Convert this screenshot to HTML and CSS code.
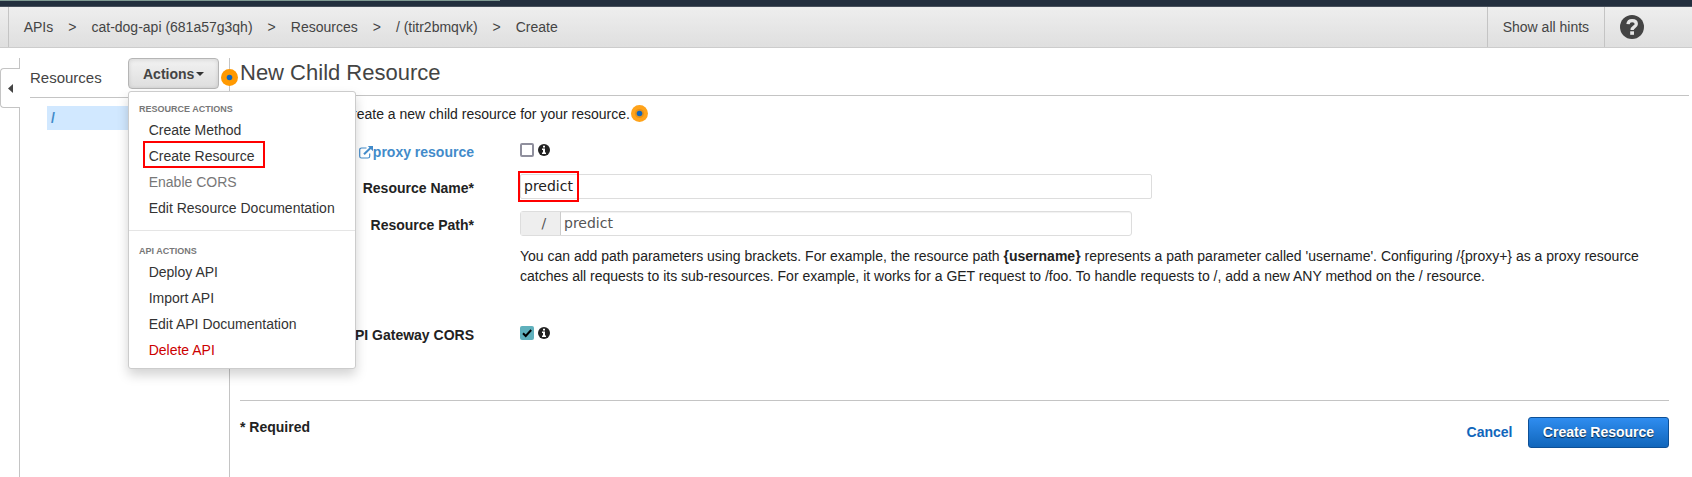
FILE: index.html
```html
<!DOCTYPE html>
<html lang="en">
<head>
<meta charset="utf-8">
<title>New Child Resource</title>
<link rel="stylesheet" href="styles.css">
</head>
<body>
<div class="topbar"><div class="progress"></div></div>
<header class="crumbs">
  <nav class="trail">
    <span>APIs</span><span class="sep">&gt;</span><span>cat-dog-api (681a57g3qh)</span><span class="sep">&gt;</span><span>Resources</span><span class="sep">&gt;</span><span>/ (titr2bmqvk)</span><span class="sep">&gt;</span><span>Create</span>
  </nav>
  <div class="hints">Show all hints</div>
  <div class="help">
    <svg width="24" height="24" viewBox="0 0 24 24"><circle cx="12" cy="12" r="12" fill="#444"/><path d="M8 9.2C8.200 6.700 9.700 5.600 12.100 5.600c2.500 0 4.200 1.300 4.200 3.400 0 3-4.200 2.900-4.200 6" fill="none" stroke="#e6e6e6" stroke-width="3.300"/><rect x="10.200" y="16.300" width="3.800" height="3.500" fill="#e6e6e6"/></svg>
  </div>
</header>
<div class="workspace">
  <div class="rail">
    <div class="tab"><svg width="5" height="9" viewBox="0 0 5 9"><path d="M5 0v9L0 4.500z" fill="#444"/></svg></div>
    <div class="rail-line"></div>
  </div>
  <aside class="sidebar">
    <div class="side-head">
      <span class="side-title">Resources</span>
      <div class="dropdown">
        <button class="actions">Actions<i class="caret"></i></button>
        <div class="menu">
          <div class="menu-title">RESOURCE ACTIONS</div>
          <div class="item">Create Method</div>
          <div class="item"><span class="marked">Create Resource</span></div>
          <div class="item disabled">Enable CORS</div>
          <div class="item">Edit Resource Documentation</div>
          <div class="divider"></div>
          <div class="menu-title">API ACTIONS</div>
          <div class="item">Deploy API</div>
          <div class="item">Import API</div>
          <div class="item">Edit API Documentation</div>
          <div class="item danger">Delete API</div>
        </div>
      </div>
      <svg class="dot side-dot" width="17" height="17" viewBox="0 0 17 17"><circle cx="8.500" cy="8.500" r="8.500" fill="#ff9900"/><circle cx="8.500" cy="8.500" r="2.800" fill="#1166bb"/></svg>
    </div>
    <div class="node">/</div>
  </aside>
  <main class="main">
    <h1>New Child Resource</h1>
    <p class="intro">Use this page to create a new child resource for your resource.<svg class="dot" width="17" height="17" viewBox="0 0 17 17"><circle cx="8.500" cy="8.500" r="8.500" fill="#ffa31a"/><circle cx="8.500" cy="8.500" r="4.600" fill="#e89218"/><circle cx="8.500" cy="8.500" r="2.800" fill="#1166bb"/></svg></p>
    <div class="form">
      <div class="row proxy">
        <label>Configure as <span class="link"><svg width="14" height="13" viewBox="0 0 14 13"><path d="M7.500 2H2.500A1.800 1.800 0 0 0 .7 3.800v6.400A1.800 1.800 0 0 0 2.500 12h6.400a1.800 1.800 0 0 0 1.800-1.800V7.500" fill="none" stroke="#428bca" stroke-width="1.200"/><path d="M5 8.200 12 1.500" stroke="#428bca" stroke-width="2"/><path d="M8.800 0H14v5.200z" fill="#428bca"/></svg>proxy resource</span></label>
        <div class="checks"><span class="box"></span><svg class="info" width="12" height="12" viewBox="0 0 12 12"><circle cx="6" cy="6" r="6" fill="#222"/><path d="M5 1.800h2v1.700H5zM4 4.600h3v3.900h1V10H4V8.500h1V6H4z" fill="#fff"/></svg></div>
      </div>
      <div class="row name">
        <label>Resource Name*</label>
        <div class="input"><span class="typed">predict</span></div>
      </div>
      <div class="row path">
        <label>Resource Path*</label>
        <div class="group"><span class="prefix">/</span><span class="value">predict</span></div>
      </div>
      <p class="note">You can add path parameters using brackets. For example, the resource path <b>{username}</b> represents a path parameter called 'username'. Configuring /{proxy+} as a proxy resource catches all requests to its sub-resources. For example, it works for a GET request to /foo. To handle requests to /, add a new ANY method on the / resource.</p>
      <div class="row cors">
        <label>Enable API Gateway CORS</label>
        <div class="checks"><span class="box on"><svg width="14" height="14" viewBox="0 0 14 14"><path d="M3 7.300 5.700 10 11.200 4" fill="none" stroke="#000" stroke-width="2"/></svg></span><svg class="info" width="12" height="12" viewBox="0 0 12 12"><circle cx="6" cy="6" r="6" fill="#222"/><path d="M5 1.800h2v1.700H5zM4 4.600h3v3.900h1V10H4V8.500h1V6H4z" fill="#fff"/></svg></div>
      </div>
    </div>
    <footer class="foot">
      <b class="required">* Required</b>
      <div class="buttons"><a class="cancel">Cancel</a><button class="primary">Create Resource</button></div>
    </footer>
  </main>
</div>
</body>
</html>
```
FILE: styles.css
```css
* { box-sizing: border-box; }
body {
  margin: 0;
  height: 477px;
  overflow: hidden;
  background: #fff;
  color: #222;
  font: 14px/20px "Liberation Sans", Arial, sans-serif;
}
h1, p { margin: 0; }
svg { display: block; flex: none; }
button { font: inherit; font-weight: bold; }

.topbar { height: 7px; background: #232f3e; border-bottom: 1px solid #48505c; }
.progress { width: 500px; height: 1px; background: #7f9a92; }

.crumbs {
  display: flex;
  height: 41px;
  padding-left: 8px;
  background: linear-gradient(#eee, #dfdfdf);
  border-bottom: 1px solid #ccc;
  color: #444;
  line-height: 40px;
}
.trail { display: flex; flex: 1; gap: 15px; padding-left: 14.700px; border-left: 1px solid #c4c4c4; }
.hints { width: 117px; padding-left: 14.700px; border-left: 1px solid #c4c4c4; }
.help { display: flex; align-items: center; width: 88px; padding-left: 15px; border-left: 1px solid #c4c4c4; }

.workspace { display: flex; height: 429px; padding-top: 10px; }
.rail { display: flex; flex-direction: column; width: 20px; }
.rail::before { content: ""; height: 10px; border-right: 1px solid #c4c4c4; }
.tab {
  display: flex;
  align-items: center;
  height: 40px;
  padding-left: 7px;
  border: 1px solid #c4c4c4;
  border-right: 0;
  border-radius: 4px 0 0 4px;
}
.rail-line { flex: 1; border-right: 1px solid #c4c4c4; }

.sidebar { width: 210px; padding-left: 10px; border-right: 1px solid #c4c4c4; }
.side-head { position: relative; display: flex; height: 40px; border-bottom: 1px solid #c4c4c4; }
.side-title { width: 98px; padding-top: 10px; font-size: 15px; color: #444; }
.dropdown { position: relative; z-index: 2; }
.actions {
  display: flex;
  align-items: center;
  width: 91px;
  height: 31px;
  padding: 0 0 0 14px;
  border: 1px solid #b5b5b5;
  border-radius: 4px;
  background: linear-gradient(#f2f2f2, #dedede);
  box-shadow: inset 0 1px 4px rgba(0, 0, 0, .12);
  color: #444;
}
.caret { margin: 1px 0 0 2px; border: 4px solid transparent; border-top-color: #333; border-bottom: 0; }
.menu {
  position: absolute;
  top: 33px;
  left: 0;
  width: 228px;
  height: 278px;
  padding-top: 8px;
  border: 1px solid #ccc;
  border-radius: 3px;
  background: #fff;
  box-shadow: 0 6px 12px rgba(0, 0, 0, .175);
  white-space: nowrap;
}
.menu-title { padding-left: 10px; font-size: 9px; font-weight: bold; line-height: 18px; color: #777; }
.item { height: 26px; padding-left: 19.700px; line-height: 26px; color: #333; }
.menu-title + .item { margin-top: -1px; }
.disabled { color: #777; }
.danger { color: #c00; }
.divider { height: 1px; margin: 9px 0 11px; background: #e5e5e5; }
.marked { display: inline-block; height: 27px; margin: -2px 0 0 -6px; padding: 0 8px 0 4px; border: 2px solid #f00; line-height: 26px; vertical-align: top; }
.side-dot { position: absolute; top: 11px; left: 191px; z-index: 3; }
.node { height: 24px; margin: 8px 0 0 17px; padding-left: 4px; background: #d1e8ff; color: #428bca; font-weight: bold; line-height: 24px; }

.main { flex: 1; padding-left: 10px; }
h1 { width: 1449px; height: 38px; border-bottom: 1px solid #c4c4c4; color: #444; font-size: 22px; font-weight: normal; line-height: 29px; }
.intro { display: flex; align-items: center; gap: 1px; height: 36px; }
.intro .dot { margin-top: -1px; }
.form { width: 1429px; height: 269px; border-bottom: 1px solid #c4c4c4; }
.row { display: grid; grid-template-columns: 234px 1fr; column-gap: 46px; }
.row label { display: flex; justify-content: flex-end; height: 27px; font-weight: bold; white-space: pre; line-height: 27px; }
.link { display: flex; align-items: center; color: #428bca; }
.proxy { height: 42px; padding-top: 7px; }
.checks { display: flex; gap: 4px; padding-top: 4px; }
.box { width: 14px; height: 14px; border: 2px solid #8f8f9d; border-radius: 2px; }
.on { border: 0; background: #5fb0bc; }
.info { margin-top: 1px; }
.name { height: 37px; }
.input { width: 632px; height: 25px; border: 1px solid #ddd; border-radius: 2px; font: 14px/22px "DejaVu Sans", sans-serif; }
.typed { display: block; width: 61px; height: 31px; margin: -4px 0 0 -3px; padding-left: 4px; border: 2px solid #f00; line-height: 26px; }
.name label, .path label { line-height: 29px; }
.path { height: 35px; }
.group { display: flex; width: 612px; height: 25px; border: 1px solid #ddd; border-radius: 3px; box-shadow: inset 0 1px 1px rgba(0, 0, 0, .06); color: #555; font: 14px/22px "DejaVu Sans", sans-serif; }
.prefix { width: 40px; padding-left: 20.500px; border-right: 1px solid #ccc; background: #eee; }
.value { padding-left: 3px; }
.note { padding-left: 280px; }
.cors { padding-top: 36px; }
.foot { display: flex; justify-content: space-between; width: 1429px; padding-top: 16px; }
.buttons { display: flex; align-items: center; gap: 15.500px; }
.cancel { padding-bottom: 1px; color: #1166bb; font-weight: bold; }
.primary {
  width: 141px;
  height: 31px;
  padding: 0 0 2px;
  border: 1px solid #0e5096;
  border-radius: 3px;
  background: linear-gradient(#2f8df0, #1166bb);
  color: #fff;
  text-shadow: 0 1px 1px rgba(0, 0, 0, .7);
}
```
